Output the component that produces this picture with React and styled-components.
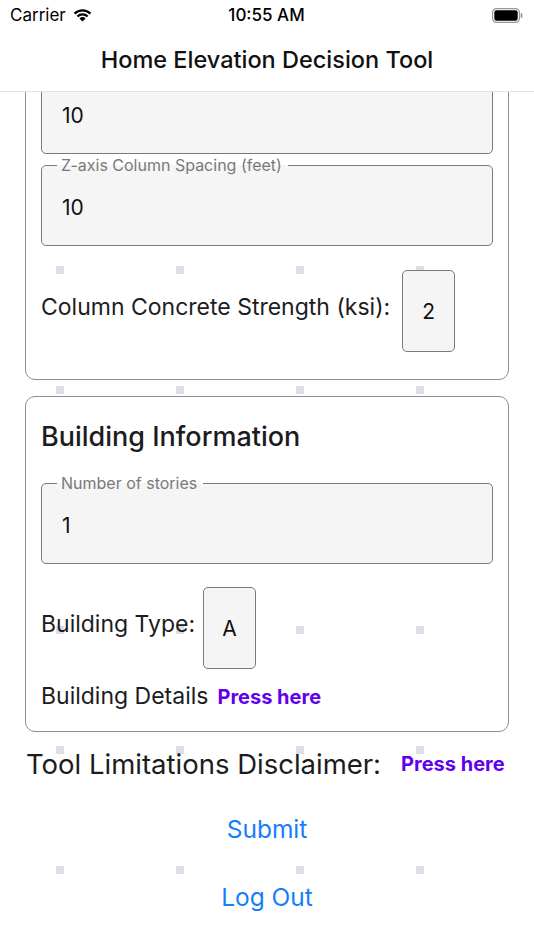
import React, { useLayoutEffect, useRef } from "react";
import styled, { createGlobalStyle } from "styled-components";

const GlobalStyle = createGlobalStyle`
  html, body {
    margin: 0;
    padding: 0;
    background: #fff;
  }
  body {
    font-family: Inter, "Noto Sans", sans-serif;
    color: #1c1c1e;
  }
  * {
    box-sizing: border-box;
  }
`;

const Screen = styled.div`
  width: 534px;
  height: 950px;
  display: flex;
  flex-direction: column;
  overflow: hidden;
  background: #fff;
`;

const StatusBar = styled.div`
  height: 30px;
  display: grid;
  grid-template-columns: 1fr auto 1fr;
  align-items: center;
  padding: 0 11px 0 10px;
  font-size: 17px;
  color: #000;
`;

const Carrier = styled.div`
  display: flex;
  align-items: center;
  gap: 7px;
`;

const Clock = styled.div`
  font-size: 17px;
  font-weight: 500;
`;

const Battery = styled.div`
  display: flex;
  justify-content: flex-end;
`;

const NavBar = styled.div`
  height: 62px;
  display: flex;
  align-items: center;
  justify-content: center;
  border-bottom: 1px solid #e2e2e2;
  font-size: 23.5px;
  font-weight: 500;
  color: #111;
  padding-bottom: 2px;
`;

const Viewport = styled.div`
  position: relative;
  flex: 1;
  overflow: hidden;
  background-color: #fff;
  background-image: conic-gradient(at 8px 8px, transparent 75%, #dcdde6 0);
  background-size: 120px 120px;
  background-position: 56px 54px;
`;

const Content = styled.div`
  padding: 0 25px 60px;
`;

const Card = styled.div`
  border: 1px solid #8e8e8e;
  border-radius: 10px;
  padding: 23px 15px ${(p) => p.$bottom || 20}px;
  margin-bottom: 16px;
`;

const CardTitle = styled.h2`
  margin: 0 0 20px;
  font-size: 27px;
  line-height: 34px;
  font-weight: 500;
  color: #1c1c1e;
`;

const Field = styled.fieldset`
  margin: ${(p) => p.$gap || 0}px 0 0;
  padding: 0;
  border: 1px solid #7a7a7a;
  border-radius: 5px;
  background: #f5f5f5;
  min-inline-size: 0;
`;

const Legend = styled.legend`
  margin-left: 15px;
  padding: 0 6px 0 4px;
  font-size: 16px;
  line-height: 18px;
  color: #7a7a7a;
`;

const FieldValue = styled.div`
  height: 71px;
  display: flex;
  align-items: center;
  padding: 0 0 4px 20px;
  font-size: 21px;
  color: #111;
`;

const Row = styled.div`
  display: flex;
  align-items: center;
  gap: ${(p) => p.$gap || 10}px;
  margin-top: ${(p) => p.$top || 0}px;
`;

const Label = styled.span`
  font-size: 23px;
  line-height: 27px;
  color: #1c1c1e;
  padding-bottom: ${(p) => p.$lift || 0}px;
`;

const Picker = styled.div`
  width: 53px;
  height: 82px;
  display: flex;
  align-items: center;
  justify-content: center;
  border: 1px solid #7a7a7a;
  border-radius: 5px;
  background: #f5f5f5;
  font-size: 21px;
  color: #111;
`;

const PressLink = styled.span`
  font-size: 20px;
  font-weight: 700;
  color: #6200ee;
`;

const Disclaimer = styled.div`
  display: flex;
  align-items: center;
  gap: 20px;
  padding-left: 1px;
  height: 32px;
`;

const DisclaimerText = styled.span`
  font-size: 27.5px;
  color: #1c1c1e;
`;

const TextButton = styled.div`
  height: 40px;
  margin-top: ${(p) => p.$top}px;
  display: flex;
  align-items: center;
  justify-content: center;
  font-size: 24.5px;
  color: #147efb;
`;

const WifiIcon = () => (
  <svg width="19" height="14" viewBox="0 0 18 13">
    <path d="M9 12.6 L6.1 9.7 a4.1 4.1 0 0 1 5.8 0 Z" fill="#000" />
    <path d="M3.4 7.1 a7.9 7.9 0 0 1 11.2 0 l-1.6 1.6 a5.6 5.6 0 0 0 -8 0 Z" fill="#000" />
    <path d="M0.7 4.4 a11.7 11.7 0 0 1 16.6 0 l-1.6 1.6 a9.4 9.4 0 0 0 -13.4 0 Z" fill="#000" />
  </svg>
);

const BatteryIcon = () => (
  <svg width="31" height="15" viewBox="0 0 31 15">
    <rect x="0.6" y="0.6" width="26.8" height="13.8" rx="3.8" fill="none" stroke="#9a9a9a" strokeWidth="1.2" />
    <rect x="2.3" y="2.3" width="23.4" height="10.4" rx="2.2" fill="#000" />
    <rect x="28.6" y="5" width="1.8" height="5" rx="0.9" fill="#9a9a9a" />
  </svg>
);

export default function App() {
  const viewportRef = useRef(null);
  const zFieldRef = useRef(null);

  useLayoutEffect(() => {
    // keep the scroll position of the form as in the screenshot
    const vp = viewportRef.current;
    const field = zFieldRef.current;
    if (vp && field) vp.scrollTop = field.offsetTop - 64;
  }, []);

  return (
    <>
      <GlobalStyle />
      <Screen>
        <StatusBar>
          <Carrier>
            Carrier <WifiIcon />
          </Carrier>
          <Clock>10:55 AM</Clock>
          <Battery>
            <BatteryIcon />
          </Battery>
        </StatusBar>
        <NavBar>Home Elevation Decision Tool</NavBar>
        <Viewport ref={viewportRef}>
          <Content>
            <Card $bottom={27}>
              <CardTitle>Column Information</CardTitle>
              <Field>
                <Legend>X-axis Column Spacing (feet)</Legend>
                <FieldValue>10</FieldValue>
              </Field>
              <Field $gap={2} ref={zFieldRef}>
                <Legend>Z-axis Column Spacing (feet)</Legend>
                <FieldValue>10</FieldValue>
              </Field>
              <Row $top={24} $gap={12}>
                <Label $lift={8}>Column Concrete Strength (ksi):</Label>
                <Picker>2</Picker>
              </Row>
            </Card>
            <Card $bottom={21}>
              <CardTitle>Building Information</CardTitle>
              <Field>
                <Legend>Number of stories</Legend>
                <FieldValue>1</FieldValue>
              </Field>
              <Row $top={23} $gap={8}>
                <Label $lift={7}>Building Type:</Label>
                <Picker>A</Picker>
              </Row>
              <Row $top={14} $gap={9}>
                <Label>Building Details</Label>
                <PressLink>Press here</PressLink>
              </Row>
            </Card>
            <Disclaimer>
              <DisclaimerText>Tool Limitations Disclaimer:</DisclaimerText>
              <PressLink>Press here</PressLink>
            </Disclaimer>
            <TextButton $top={29}>Submit</TextButton>
            <TextButton $top={28}>Log Out</TextButton>
          </Content>
        </Viewport>
      </Screen>
    </>
  );
}
